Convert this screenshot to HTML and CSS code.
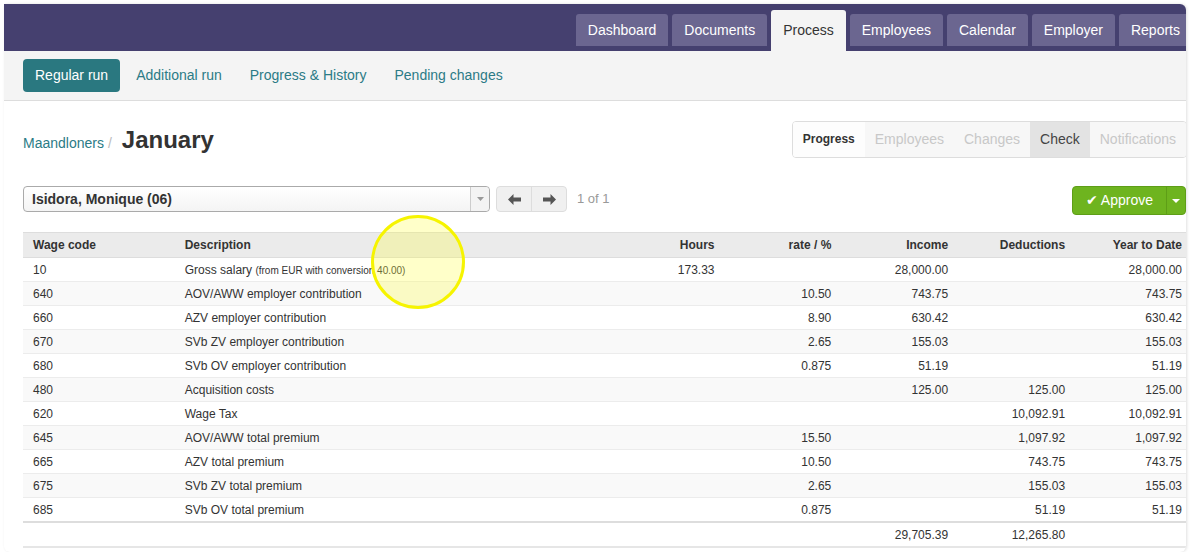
FILE: index.html
```html
<!DOCTYPE html>
<html lang="en">
<head>
    <meta charset="UTF-8">
    <title>Process - Regular run</title>
    <link rel="stylesheet" href="styles.css">
</head>
<body>
    <div class="window">
        <div class="topbar">
            <ul class="main-tabs">
                <li>Dashboard</li>
                <li>Documents</li>
                <li class="active">Process</li>
                <li>Employees</li>
                <li>Calendar</li>
                <li>Employer</li>
                <li>Reports</li>
            </ul>
        </div>

        <div class="subnav">
            <a class="sub-link current">Regular run</a>
            <a class="sub-link">Additional run</a>
            <a class="sub-link">Progress &amp; History</a>
            <a class="sub-link">Pending changes</a>
        </div>

        <div class="content">
            <div class="title-row">
                <div class="crumbs">
                    <a class="crumb">Maandloners</a><span class="sep">/</span>
                    <h1>January</h1>
                </div>
                <ul class="steps">
                    <li class="done">Progress</li>
                    <li class="off">Employees</li>
                    <li class="off">Changes</li>
                    <li class="on">Check</li>
                    <li class="off">Notifications</li>
                </ul>
            </div>

            <div class="tools-row">
                <div class="picker">
                    <div class="select">
                        <span class="select-value">Isidora, Monique (06)</span>
                        <span class="select-arrow"><svg width="7" height="4" viewBox="0 0 7 4"><path d="M0 0h7L3.5 4z" fill="#999"/></svg></span>
                    </div>
                    <div class="pager">
                        <span class="pager-btn"><svg width="13" height="11" viewBox="0 0 13 11"><path d="M0 5.5L5.5 0v3.5H13v4H5.5V11z" fill="#555"/></svg></span>
                        <span class="pager-btn"><svg width="13" height="11" viewBox="0 0 13 11"><path d="M13 5.5L7.5 0v3.5H0v4h7.5V11z" fill="#555"/></svg></span>
                    </div>
                    <span class="count">1 of 1</span>
                </div>
                <div class="approve">
                    <span class="approve-main"><span class="tick">&#10004;</span>Approve</span>
                    <span class="approve-caret"><svg width="8" height="4" viewBox="0 0 8 4"><path d="M0 0h8L4 4z" fill="#fff"/></svg></span>
                </div>
            </div>

            <table class="wages">
                <thead>
                    <tr>
                        <th class="c-code">Wage code</th>
                        <th class="c-desc">Description</th>
                        <th class="num">Hours</th>
                        <th class="num">rate / %</th>
                        <th class="num">Income</th>
                        <th class="num">Deductions</th>
                        <th class="num">Year to Date</th>
                    </tr>
                </thead>
                <tbody>
                    <tr><td>10</td><td>Gross salary <small>(from EUR with conversion 40.00)</small></td><td class="num">173.33</td><td class="num"></td><td class="num">28,000.00</td><td class="num"></td><td class="num">28,000.00</td></tr>
                    <tr><td>640</td><td>AOV/AWW employer contribution</td><td class="num"></td><td class="num">10.50</td><td class="num">743.75</td><td class="num"></td><td class="num">743.75</td></tr>
                    <tr><td>660</td><td>AZV employer contribution</td><td class="num"></td><td class="num">8.90</td><td class="num">630.42</td><td class="num"></td><td class="num">630.42</td></tr>
                    <tr><td>670</td><td>SVb ZV employer contribution</td><td class="num"></td><td class="num">2.65</td><td class="num">155.03</td><td class="num"></td><td class="num">155.03</td></tr>
                    <tr><td>680</td><td>SVb OV employer contribution</td><td class="num"></td><td class="num">0.875</td><td class="num">51.19</td><td class="num"></td><td class="num">51.19</td></tr>
                    <tr><td>480</td><td>Acquisition costs</td><td class="num"></td><td class="num"></td><td class="num">125.00</td><td class="num">125.00</td><td class="num">125.00</td></tr>
                    <tr><td>620</td><td>Wage Tax</td><td class="num"></td><td class="num"></td><td class="num"></td><td class="num">10,092.91</td><td class="num">10,092.91</td></tr>
                    <tr><td>645</td><td>AOV/AWW total premium</td><td class="num"></td><td class="num">15.50</td><td class="num"></td><td class="num">1,097.92</td><td class="num">1,097.92</td></tr>
                    <tr><td>665</td><td>AZV total premium</td><td class="num"></td><td class="num">10.50</td><td class="num"></td><td class="num">743.75</td><td class="num">743.75</td></tr>
                    <tr><td>675</td><td>SVb ZV total premium</td><td class="num"></td><td class="num">2.65</td><td class="num"></td><td class="num">155.03</td><td class="num">155.03</td></tr>
                    <tr><td>685</td><td>SVb OV total premium</td><td class="num"></td><td class="num">0.875</td><td class="num"></td><td class="num">51.19</td><td class="num">51.19</td></tr>
                </tbody>
                <tfoot>
                    <tr><td></td><td></td><td class="num"></td><td class="num"></td><td class="num">29,705.39</td><td class="num">12,265.80</td><td class="num"></td></tr>
                </tfoot>
            </table>

            <div class="cursor-ring"></div>
        </div>
    </div>
</body>
</html>
```

FILE: styles.css
```css
body {
    margin: 0;
    background: #fff;
    font-family: "Liberation Sans", Arial, sans-serif;
    color: #333;
}

.window {
    margin: 4px 0 0 4px;
    width: 1182px;
    height: 548px;
    overflow: hidden;
    background: #fff;
    border-radius: 0 6px 6px 6px;
    box-shadow: 1px 0 3px rgba(0, 0, 0, 0.12);
}

/* top bar */
.topbar {
    height: 47px;
    background: #45406f;
    display: flex;
    justify-content: flex-end;
    align-items: flex-end;
}

.main-tabs {
    list-style: none;
    margin: 0 -6px 0 0;
    padding: 0;
    display: flex;
    align-items: flex-end;
    gap: 4px;
}

.main-tabs li {
    height: 32px;
    line-height: 32px;
    padding: 0 12px;
    margin-bottom: 5px;
    background: #6b6690;
    color: #fff;
    font-size: 14px;
    border-radius: 3px 3px 0 0;
}

.main-tabs li.active {
    height: 41px;
    line-height: 41px;
    margin-bottom: 0;
    background: #f4f4f4;
    color: #333;
}

/* sub navigation */
.subnav {
    height: 49px;
    background: #f4f4f4;
    border-bottom: 1px solid #ddd;
    display: flex;
    align-items: center;
    gap: 4px;
    padding: 0 19px;
}

.sub-link {
    padding: 0 12px;
    height: 33px;
    line-height: 33px;
    font-size: 14px;
    color: #2b7b86;
    border-radius: 4px;
    margin-top: -1px;
}

.sub-link.current {
    background: #2a7880;
    color: #fff;
}

/* content */
.content {
    position: relative;
    padding: 20px 0 0 19px;
}

.title-row {
    display: flex;
    justify-content: space-between;
    align-items: center;
    height: 37px;
}

.crumbs {
    display: flex;
    align-items: baseline;
}

.crumb {
    color: #2b7b86;
    font-size: 14px;
}

.sep {
    color: #bbb;
    font-size: 14px;
    margin: 0 10px 0 4px;
}

h1 {
    margin: 0;
    font-size: 24px;
    font-weight: bold;
    color: #333;
}

.steps {
    list-style: none;
    margin: 0 -1px 0 0;
    padding: 0;
    display: flex;
    border: 1px solid #ddd;
    border-radius: 4px;
    overflow: hidden;
    height: 35px;
}

.steps li {
    padding: 0 10px;
    line-height: 35px;
    font-size: 14px;
    background: #f7f7f7;
}

.steps li.done {
    background: #fdfdfd;
    font-size: 12px;
    font-weight: bold;
    color: #333;
}

.steps li.off {
    color: #c8c8c8;
}

.steps li.on {
    background: #e3e3e3;
    color: #444;
}

/* employee picker */
.tools-row {
    margin-top: 28px;
    display: flex;
    justify-content: space-between;
    align-items: flex-start;
}

.picker {
    display: flex;
    align-items: center;
}

.select {
    width: 465px;
    height: 24px;
    border: 1px solid #aaa;
    border-radius: 4px;
    display: flex;
    align-items: center;
    justify-content: space-between;
    background: linear-gradient(#fff, #f4f4f4);
}

.select-value {
    font-size: 14px;
    font-weight: bold;
    padding-left: 8px;
}

.select-arrow {
    width: 18px;
    height: 24px;
    border-left: 1px solid #ccc;
    background: #f3f3f3;
    border-radius: 0 4px 4px 0;
    display: flex;
    align-items: center;
    justify-content: center;
}

.pager {
    display: flex;
    margin-left: 6px;
    border: 1px solid #ddd;
    border-radius: 4px;
    background: #f0f0f0;
}

.pager-btn {
    width: 34px;
    height: 24px;
    display: flex;
    align-items: center;
    justify-content: center;
}

.pager-btn + .pager-btn {
    border-left: 1px solid #ddd;
}

.count {
    margin-left: 10px;
    font-size: 13px;
    color: #999;
    margin-top: -2px;
}

.approve {
    display: flex;
    height: 29px;
    margin-right: 0;
    background: #6eb41f;
    border: 1px solid #5e9e17;
    border-radius: 4px;
    color: #fff;
    font-size: 14px;
    box-sizing: border-box;
}

.approve-main {
    padding: 0 13px 0 13px;
    line-height: 27px;
    display: flex;
    align-items: center;
}

.tick {
    font-family: "DejaVu Sans", sans-serif;
    font-size: 14px;
    margin-right: 3px;
}

.approve-caret {
    width: 18px;
    border-left: 1px solid #5e9e17;
    display: flex;
    align-items: center;
    justify-content: center;
}

/* wage table */
.wages {
    margin-top: 17px;
    width: 1169px;
    border-collapse: collapse;
    font-size: 12px;
    color: #333;
}

.wages th {
    height: 24px;
    background: #ebebeb;
    border-top: 1px solid #ddd;
    border-bottom: 1px solid #ddd;
    text-align: left;
    font-weight: bold;
    padding: 0 10px;
}

.wages td {
    height: 23px;
    padding: 0 10px;
    border-bottom: 1px solid #ececec;
}

.wages .c-code {
    width: 132px;
}

.wages .c-desc {
    width: 414px;
}

.wages .num {
    width: 97px;
    text-align: right;
}

.wages tbody tr:nth-child(even) td {
    background: #f9f9f9;
}

.wages tbody tr:last-child td {
    border-bottom: 2px solid #ddd;
}

.wages tfoot td {
    border-bottom: 2px solid #e6e6e6;
}

.wages small {
    font-size: 10px;
}

.cursor-ring {
    position: absolute;
    left: 367px;
    top: 114px;
    width: 88px;
    height: 88px;
    border: 3px solid #f6f400;
    border-radius: 50%;
    background: rgba(255, 255, 60, 0.28);
}
```
